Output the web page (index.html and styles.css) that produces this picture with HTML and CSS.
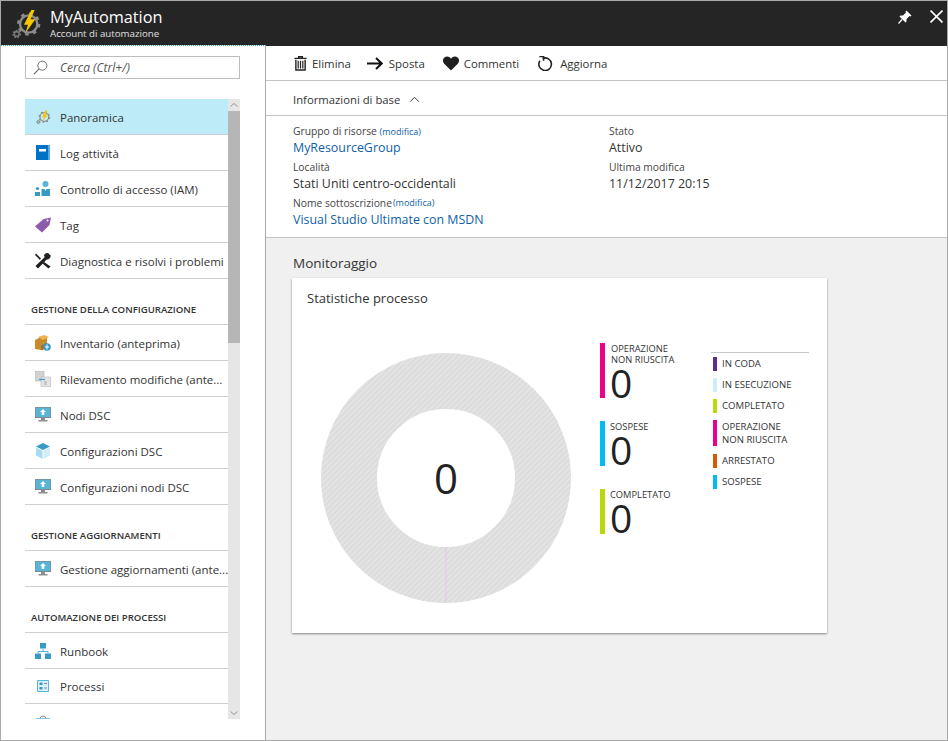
FILE: index.html
```html
<!DOCTYPE html>
<html lang="it">
<head>
    <meta charset="UTF-8">
    <meta name="viewport" content="width=device-width, initial-scale=1.0">
    <title>MyAutomation</title>
    <link rel="stylesheet" href="styles.css">
</head>
<body>
    <svg class="sprites" width="0" height="0">
        <symbol id="i-gear" viewBox="0 0 48 48">
            <g fill="none" stroke="#8c8c8c">
                <circle cx="28" cy="24" r="13" stroke-width="3.5"/>
                <circle cx="28" cy="24" r="15.5" stroke-width="4" stroke-dasharray="5.2 6.97"/>
                <circle cx="10" cy="39" r="3.6" stroke="#777" stroke-width="2.4"/>
                <circle cx="10" cy="39" r="5.4" stroke="#777" stroke-width="2" stroke-dasharray="2.6 2.05"/>
            </g>
            <path d="M32 3 L21 25 H27 L23 38 L38 17 H31 L37 3 Z" fill="#f6c700"/>
        </symbol>
        <symbol id="i-book" viewBox="0 0 16 16">
            <path d="M1 0H15V15H1Z" fill="#0072c6"/>
            <path d="M13 0h2v15h-2z" fill="#5ca9de"/>
            <path d="M4 4h7v2.5H4z" fill="#fff"/>
        </symbol>
        <symbol id="i-iam" viewBox="0 0 16 16">
            <circle cx="10.5" cy="3" r="3" fill="#59b4d9"/>
            <path d="M6.500 8h3l1 2 1-2h3.500v7H6.500z" fill="#3999c6"/>
            <circle cx="2.500" cy="7.500" r="1.600" fill="#3999c6"/>
            <path d="M0 11h5v4H0z" fill="#3999c6"/>
        </symbol>
        <symbol id="i-tag" viewBox="0 0 16 16">
            <path d="M0 9.500 8.500 2 16 0.500 14.500 8 7 15.500Z" fill="#8e5bab"/>
            <circle cx="12.500" cy="3.500" r="1" fill="#fff"/>
        </symbol>
        <symbol id="i-tools" viewBox="0 0 16 16">
            <path d="M1 0.500 6 5.500 4.800 6.800 0 2ZM13.500 0.500 15.500 2.500 3 15.500 0.500 13Z" fill="#1e1e1e"/>
            <path d="M9 9 15.500 13.500 13.500 15.500 7.500 10.500Z" fill="#1e1e1e"/>
            <path d="M9 2.500a3.500 3.500 0 0 1 5-2l-2.500 2.500 1.500 1.500 2.500-2.500a3.500 3.500 0 0 1-5 4Z" fill="#1e1e1e"/>
        </symbol>
        <symbol id="i-box" viewBox="0 0 16 16">
            <path d="M0 5 8 1l4 2v4l-6 3v5l-6-1z" fill="#c98a2b"/>
            <path d="M3 2 9 0l5 2-6 3z" fill="#eeb54f"/>
            <path d="M6 10l6-3v3l-4 5H6z" fill="#a86f1c"/>
            <circle cx="12" cy="12" r="3.800" fill="#3999c6"/>
            <path d="M12 9.500v5M10 12h4" stroke="#fff" stroke-width="1"/>
        </symbol>
        <symbol id="i-track" viewBox="0 0 16 16">
            <path d="M0 0H9V10H0Z" fill="#d2d2d2" stroke="#aaa" stroke-width=".5"/>
            <path d="M6 6H15.500V15.500H6Z" fill="#e4e4e4" stroke="#aaa" stroke-width=".5"/>
            <path d="M4 8.500h6" stroke="#3999c6" stroke-width="1.200"/>
            <path d="M9 11h3M9 13h3" stroke="#999" stroke-width=".8"/>
        </symbol>
        <symbol id="i-monitor" viewBox="0 0 16 16">
            <path d="M0 0H16V11H0Z" fill="#7f8a90"/>
            <path d="M0.700 0.700H15.300V10H0.700Z" fill="#59b4d9"/>
            <path d="M8 2 11 5H9.300V8H6.700V5H5Z" fill="#fff"/>
            <path d="M6 11H10V13H6ZM3.500 13H12.500V14.500H3.500Z" fill="#8e8e8e"/>
        </symbol>
        <symbol id="i-cube" viewBox="0 0 16 16">
            <path d="M8 0 15 3.500 8 7 1 3.500Z" fill="#3999c6"/>
            <path d="M1 4.500 7.500 8V16L1 12.500Z" fill="#a5dcf2"/>
            <path d="M15 4.500 8.500 8V16L15 12.500Z" fill="#cfeefa"/>
        </symbol>
        <symbol id="i-runbook" viewBox="0 0 16 16">
            <path d="M5 0H11V5.500H5ZM0 10.500H6V16H0ZM10 10.500H16V16H10Z" fill="#3999c6"/>
            <path d="M8 5.500V8.500M3 10.500V8.500H13V10.500" fill="none" stroke="#59b4d9" stroke-width="1"/>
        </symbol>
        <symbol id="i-jobs" viewBox="0 0 12 12">
            <path d="M.5.500H11.500V11.500H.5Z" fill="#d9f0fa" stroke="#59b4d9"/>
            <path d="M2.500 2.500H5.500V5H2.500ZM2.500 7H5.500V9.500H2.500Z" fill="#3999c6"/>
            <path d="M7 3.500H10M7 8H10" stroke="#7f8a90"/>
        </symbol>
        <symbol id="i-dome" viewBox="0 0 16 16">
            <path d="M5 5a3 3 0 0 1 6 0" fill="none" stroke="#8e8e8e" stroke-width="1"/>
            <path d="M1 5H15" stroke="#59b4d9" stroke-width="1.500"/>
        </symbol>
    </svg>

    <div class="window">
        <header class="topbar">
            <svg class="topbar-logo"><use href="#i-gear"/></svg>
            <div class="topbar-titles">
                <div class="topbar-title">MyAutomation</div>
                <div class="topbar-sub">Account di automazione</div>
            </div>
            <svg class="topbar-pin" viewBox="0 0 14 14">
                <path d="M8.500 0.500 13.500 5.500 12.500 6.500 11.500 6 8.500 9 8.500 11.500 7.500 12.500 1.500 6.500 2.500 5.500 5 5.500 8 2.500 7.500 1.500Z" fill="#fff"/>
                <path d="M4 9.500 0.500 13.500" stroke="#fff" stroke-width="1.200"/>
            </svg>
            <svg class="topbar-close" viewBox="0 0 12 12">
                <path d="M0.500 0.500 11.500 11.500M11.500 0.500 0.500 11.500" stroke="#fff" stroke-width="1.500"/>
            </svg>
        </header>

        <div class="panes">
            <aside class="sidebar">
                <div class="search">
                    <svg class="search-icon" viewBox="0 0 16 16">
                        <circle cx="10" cy="6" r="4.800" fill="none" stroke="#666" stroke-width="1"/>
                        <path d="M6.500 9.500 1 15" stroke="#666" stroke-width="1.200"/>
                    </svg>
                    <span>Cerca (Ctrl+/)</span>
                </div>
                <div class="menu-wrap">
                    <nav class="menu">
                        <a class="menu-item active"><svg class="menu-icon"><use href="#i-gear"/></svg><span>Panoramica</span></a>
                        <a class="menu-item"><svg class="menu-icon"><use href="#i-book"/></svg><span>Log attività</span></a>
                        <a class="menu-item"><svg class="menu-icon"><use href="#i-iam"/></svg><span>Controllo di accesso (IAM)</span></a>
                        <a class="menu-item"><svg class="menu-icon"><use href="#i-tag"/></svg><span>Tag</span></a>
                        <a class="menu-item"><svg class="menu-icon"><use href="#i-tools"/></svg><span>Diagnostica e risolvi i problemi</span></a>
                        <div class="menu-head">GESTIONE DELLA CONFIGURAZIONE</div>
                        <a class="menu-item"><svg class="menu-icon"><use href="#i-box"/></svg><span>Inventario (anteprima)</span></a>
                        <a class="menu-item"><svg class="menu-icon"><use href="#i-track"/></svg><span>Rilevamento modifiche (ante...</span></a>
                        <a class="menu-item"><svg class="menu-icon"><use href="#i-monitor"/></svg><span>Nodi DSC</span></a>
                        <a class="menu-item"><svg class="menu-icon"><use href="#i-cube"/></svg><span>Configurazioni DSC</span></a>
                        <a class="menu-item"><svg class="menu-icon"><use href="#i-monitor"/></svg><span>Configurazioni nodi DSC</span></a>
                        <div class="menu-head">GESTIONE AGGIORNAMENTI</div>
                        <a class="menu-item"><svg class="menu-icon"><use href="#i-monitor"/></svg><span>Gestione aggiornamenti (ante...</span></a>
                        <div class="menu-head">AUTOMAZIONE DEI PROCESSI</div>
                        <a class="menu-item"><svg class="menu-icon"><use href="#i-runbook"/></svg><span>Runbook</span></a>
                        <a class="menu-item short"><svg class="menu-icon small"><use href="#i-jobs"/></svg><span>Processi</span></a>
                        <a class="menu-item"><svg class="menu-icon"><use href="#i-dome"/></svg></a>
                    </nav>
                    <div class="scrollbar">
                        <svg class="scroll-arrow" viewBox="0 0 12 12"><path d="M2.500 7.500 6 4.500 9.500 7.500" fill="none" stroke="#999"/></svg>
                        <div class="scroll-thumb"></div>
                        <svg class="scroll-arrow bottom" viewBox="0 0 12 12"><path d="M2.500 4.500 6 7.500 9.500 4.500" fill="none" stroke="#999"/></svg>
                    </div>
                </div>
            </aside>

            <main class="content">
                <div class="toolbar">
                    <a class="tool tool-del">
                        <svg viewBox="0 0 14 16" class="tool-icon"><path d="M0.500 2.500H13.500M5 2.500V.800H9V2.500M2 4V15H12V4" fill="none" stroke="#222" stroke-width="1.500"/><path d="M4.500 5V13.500M7 5V13.500M9.500 5V13.500" stroke="#222" stroke-width="1.300"/></svg>
                        <span>Elimina</span>
                    </a>
                    <a class="tool tool-move">
                        <svg viewBox="0 0 16 14" class="tool-icon wide"><path d="M0 7H14.500M9 1.500 14.700 7 9 12.500" fill="none" stroke="#111" stroke-width="2"/></svg>
                        <span>Sposta</span>
                    </a>
                    <a class="tool tool-fb">
                        <svg viewBox="0 0 16 14" class="tool-icon wide"><path d="M8 14 1.200 7.200C-1.800 3.500 1 0 4 0 5.800 0 7 .8 8 2.200 9 .8 10.200 0 12 0 15 0 17.800 3.500 14.800 7.200Z" fill="#1e1e1e"/></svg>
                        <span>Commenti</span>
                    </a>
                    <a class="tool tool-refresh">
                        <svg viewBox="0 0 16 16" class="tool-icon wide"><path d="M5.500 2.600A6.700 6.700 0 1 1 2.600 5" fill="none" stroke="#222" stroke-width="1.700"/><path d="M2 .500H6.500V5" fill="none" stroke="#222" stroke-width="1.700"/></svg>
                        <span>Aggiorna</span>
                    </a>
                </div>

                <div class="section-toggle">
                    <span>Informazioni di base</span>
                    <svg viewBox="0 0 12 8" class="toggle-arrow"><path d="M1 6.500 6 1.500 11 6.500" fill="none" stroke="#333" stroke-width="1.100"/></svg>
                </div>

                <section class="details">
                    <div class="detail-col">
                        <div class="detail-label">Gruppo di risorse <a class="edit">(modifica)</a></div>
                        <div class="detail-value link">MyResourceGroup</div>
                        <div class="detail-label">Località</div>
                        <div class="detail-value">Stati Uniti centro-occidentali</div>
                        <div class="detail-label">Nome sottoscrizione<a class="edit raised">(modifica)</a></div>
                        <div class="detail-value link">Visual Studio Ultimate con MSDN</div>
                    </div>
                    <div class="detail-col">
                        <div class="detail-label">Stato</div>
                        <div class="detail-value">Attivo</div>
                        <div class="detail-label">Ultima modifica</div>
                        <div class="detail-value">11/12/2017 20:15</div>
                    </div>
                </section>

                <section class="monitor">
                    <h3 class="monitor-title">Monitoraggio</h3>
                    <div class="card">
                        <div class="card-title">Statistiche processo</div>
                        <div class="card-body">
                            <svg class="donut" viewBox="0 0 250 250">
                                <defs>
                                    <pattern id="hatch" width="4" height="4" patternUnits="userSpaceOnUse" patternTransform="rotate(-45)">
                                        <rect width="4" height="4" fill="#dcdcdc"/>
                                        <rect width="4" height="1.500" fill="#e6e6e6"/>
                                    </pattern>
                                </defs>
                                <circle cx="125" cy="125" r="97" fill="none" stroke="url(#hatch)" stroke-width="56"/>
                                <path d="M125 194V250" stroke="#e3c5e8" stroke-width="1"/>
                                <text x="125" y="141" text-anchor="middle" class="donut-total">0</text>
                            </svg>

                            <div class="stats">
                                <div class="stat stat-fail">
                                    <div class="stat-label indent">OPERAZIONE<br>NON RIUSCITA</div>
                                    <div class="stat-num">0</div>
                                </div>
                                <div class="stat stat-susp">
                                    <div class="stat-label">SOSPESE</div>
                                    <div class="stat-num">0</div>
                                </div>
                                <div class="stat stat-done">
                                    <div class="stat-label">COMPLETATO</div>
                                    <div class="stat-num">0</div>
                                </div>
                            </div>

                            <ul class="legend">
                                <li class="legend-row queued">IN CODA</li>
                                <li class="legend-row running">IN ESECUZIONE</li>
                                <li class="legend-row done">COMPLETATO</li>
                                <li class="legend-row failed">OPERAZIONE<br>NON RIUSCITA</li>
                                <li class="legend-row stopped">ARRESTATO</li>
                                <li class="legend-row suspended">SOSPESE</li>
                            </ul>
                        </div>
                    </div>
                </section>
            </main>
        </div>
    </div>
</body>
</html>
```

FILE: styles.css
```css
* {
    box-sizing: border-box;
}
html, body {
    margin: 0;
    height: 100%;
}
body {
    font-family: "Open Sans", "Liberation Sans", sans-serif;
    color: #2b2b2b;
    overflow: hidden;
}
.sprites {
    position: absolute;
}
.window {
    width: 948px;
    height: 741px;
    border: 1px solid #a9a9a9;
    display: flex;
    flex-direction: column;
}

/* barra superiore */
.topbar {
    height: 44px;
    background: #252525;
    color: #fff;
    display: flex;
    align-items: flex-start;
    flex-shrink: 0;
}
.topbar-logo {
    width: 32px;
    height: 32px;
    margin: 7px 0 0 9px;
}
.topbar-titles {
    margin-left: 8px;
}
.topbar-title {
    font-size: 16.300px;
    line-height: 22px;
    margin-top: 5px;
}
.topbar-sub {
    font-size: 9.700px;
    line-height: 12px;
    color: #e0e0e0;
}
.topbar-pin {
    width: 14px;
    height: 14px;
    margin: 9px 0 0 auto;
}
.topbar-close {
    width: 13px;
    height: 13px;
    margin: 9px 4px 0 18px;
}

.panes {
    flex: 1;
    display: flex;
    min-height: 0;
}

/* menu laterale */
.sidebar {
    width: 265px;
    flex-shrink: 0;
    border-top: 1px dotted #2fa7cf;
    border-right: 1px solid #a9a9a9;
    padding: 10px 25px 0 24px;
}
.search {
    height: 23px;
    border: 1px solid #bdbdbd;
    display: flex;
    align-items: center;
    padding-bottom: 1px;
    font-size: 12px;
    font-style: italic;
    color: #555;
}
.search-icon {
    width: 15px;
    height: 15px;
    margin: 0 12px 0 7px;
}
.menu-wrap {
    height: 620px;
    margin-top: 20px;
    display: flex;
    overflow: hidden;
}
.menu {
    width: 203px;
    flex-shrink: 0;
}
.menu-item {
    height: 36px;
    display: flex;
    align-items: center;
    border-bottom: 1px solid #cfcfcf;
    font-size: 11.500px;
    color: #333;
    white-space: nowrap;
}
.menu-item span {
    padding-top: 2px;
}
.menu-item.short {
    height: 35px;
}
.menu-item.short span {
    padding-top: 0;
}
.menu-item.active {
    background: #bdecf8;
}
.menu-icon {
    width: 16px;
    height: 16px;
    margin: 0 9px 0 10px;
    flex-shrink: 0;
}
.menu-icon.small {
    width: 12px;
    height: 12px;
    margin: 0 11px 0 12px;
}
.menu-head {
    height: 46px;
    padding: 24px 0 0 6px;
    border-bottom: 1px solid #cfcfcf;
    font-size: 9.600px;
    line-height: 13px;
    font-weight: 600;
    color: #333;
}
.scrollbar {
    width: 12px;
    background: #e6e6e6;
    display: flex;
    flex-direction: column;
}
.scroll-arrow {
    width: 12px;
    height: 12px;
    flex-shrink: 0;
}
.scroll-arrow.bottom {
    margin-top: auto;
}
.scroll-thumb {
    height: 232px;
    background: #b6b6b6;
}

/* contenuto */
.content {
    flex: 1;
    display: flex;
    flex-direction: column;
    border-top: 1px solid #252525;
    min-width: 0;
}
.toolbar {
    height: 35px;
    border-bottom: 1px solid #c4c4c4;
    display: flex;
    align-items: center;
    padding-left: 28px;
    font-size: 11.400px;
}
.tool {
    display: flex;
    align-items: center;
    gap: 5px;
    color: #333;
}
.tool-del {
    margin-right: 16px;
}
.tool-move {
    gap: 6px;
    margin-right: 18px;
}
.tool-fb {
    margin-right: 18px;
}
.tool-refresh {
    gap: 7px;
}
.tool-icon {
    width: 13px;
    height: 15px;
}
.tool-icon.wide {
    width: 16px;
}
.section-toggle {
    height: 35px;
    border-bottom: 1px solid #c4c4c4;
    display: flex;
    align-items: center;
    padding: 2px 0 0 27px;
    font-size: 11.300px;
    color: #333;
}
.toggle-arrow {
    width: 11px;
    height: 7px;
    margin-left: 9px;
}
.details {
    height: 122px;
    padding: 7px 0 0 27px;
    border-bottom: 1px solid #c4c4c4;
    display: flex;
    flex-shrink: 0;
}
.detail-col {
    width: 316px;
}
.detail-label {
    height: 16px;
    font-size: 10.300px;
    line-height: 16px;
    color: #444;
}
.detail-value {
    height: 20px;
    font-size: 12.400px;
    line-height: 17px;
    color: #333;
}
.link {
    color: #0f5fa8;
}
.edit {
    font-size: 9px;
    color: #0f5fa8;
}
.edit.raised {
    position: relative;
    top: -1px;
    margin-left: 1px;
}

.monitor {
    flex: 1;
    background: #f0f0f0;
    padding: 16px 0 0 26px;
}
.monitor-title {
    margin: 0 0 0 1px;
    font-size: 13.500px;
    line-height: 19px;
    font-weight: 400;
    color: #333;
}
.card {
    width: 535px;
    height: 355px;
    margin-top: 5px;
    background: #fff;
    box-shadow: 0 1px 2px rgba(0, 0, 0, 0.45);
}
.card-title {
    padding: 12px 0 0 15px;
    font-size: 13px;
    line-height: 17px;
    color: #333;
}
.card-body {
    display: flex;
    align-items: flex-start;
    margin-top: 46px;
    padding-left: 29px;
}
.donut {
    width: 250px;
    height: 250px;
    flex-shrink: 0;
}
.donut-total {
    font-family: "Open Sans", "Liberation Sans", sans-serif;
    font-size: 42px;
    fill: #222;
}
.stats {
    margin: -10px 0 0 29px;
    width: 111px;
    flex-shrink: 0;
}
.stat {
    border-left: 5px solid #000;
    padding-left: 5px;
    margin-bottom: 23px;
    height: 45px;
}
.stat-fail {
    height: 55px;
    border-color: #ec008c;
}
.stat-susp {
    border-color: #00bcf2;
}
.stat-done {
    border-color: #bad80a;
}
.stat-label {
    font-size: 9.300px;
    line-height: 11px;
    color: #333;
}
.stat-label.indent {
    padding-left: 1px;
}
.stat-num {
    font-size: 39px;
    line-height: 35px;
    color: #222;
}
.legend {
    list-style: none;
    width: 98px;
    margin: -1px 0 0 0;
    padding: 4px 0 0 2px;
    border-top: 1px solid #c8c8c8;
}
.legend-row {
    border-left: 4px solid #000;
    padding-left: 5px;
    margin-bottom: 7px;
    min-height: 14px;
    font-size: 9.600px;
    line-height: 14px;
    color: #333;
}
.legend-row.failed {
    line-height: 13px;
    margin-bottom: 8px;
}
.queued { border-color: #5c2d91; }
.running { border-color: #c7f0f8; }
.done { border-color: #bad80a; }
.failed { border-color: #ec008c; }
.stopped { border-color: #d85a00; }
.suspended { border-color: #00bcf2; }
```
